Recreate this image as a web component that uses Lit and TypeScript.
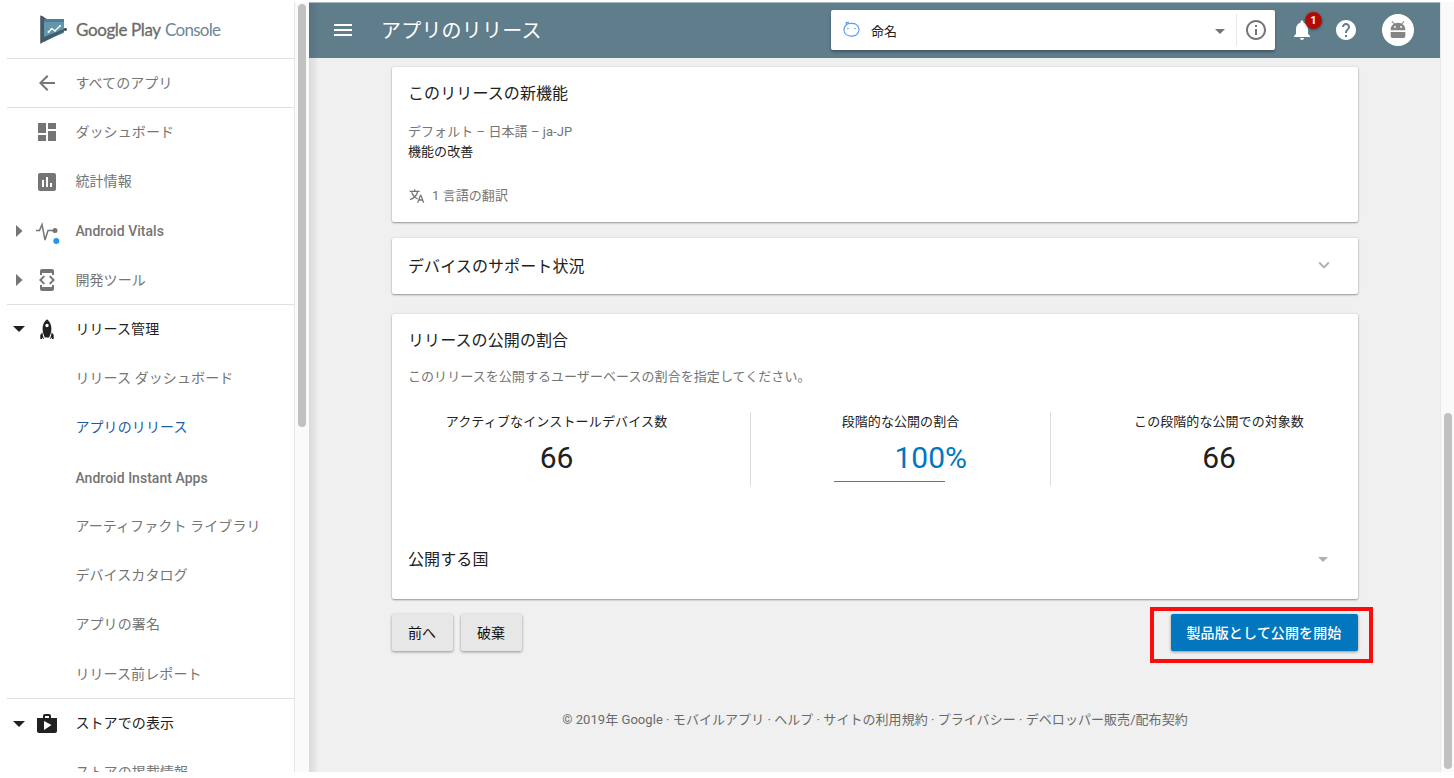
import { LitElement, html, svg, css, nothing } from "lit";
import { customElement, property } from "lit/decorators.js";
import { classMap } from "lit/directives/class-map.js";

const base = css`
  *, *::before, *::after { box-sizing: border-box; }
  svg { display: block; flex: none; }
`;

const icons: Record<string, unknown> = {
  back: svg`<path d="M20 11H7.83l5.59-5.59L12 4l-8 8 8 8 1.41-1.41L7.83 13H20v-2z"/>`,
  dashboard: svg`<path d="M3 13h8V3H3v10zm0 8h8v-6H3v6zm10 0h8V11h-8v10zm0-18v6h8V3h-8z"/>`,
  stats: svg`<path d="M19 3H5c-1.1 0-2 .9-2 2v14c0 1.1.9 2 2 2h14c1.1 0 2-.9 2-2V5c0-1.1-.9-2-2-2zM9 17H7v-7h2v7zm4 0h-2V7h2v10zm4 0h-2v-4h2v4z"/>`,
  vitals: svg`<path d="M1 11.500h3.500L7 5.500l3 15.500 3-9.500h6" fill="none" stroke="currentColor" stroke-width="1.500"/><circle cx="20" cy="11.500" r="2.500"/><circle cx="21.300" cy="22" r="3" fill="#2196f3"/>`,
  tools: svg`<path d="M7 5h10v2h2V3c0-1.1-.9-1.99-2-1.99L7 1c-1.1 0-2 .9-2 2v4h2V5zm8.41 11.59L20 12l-4.59-4.59L14 8.83 17.17 12 14 15.17l1.41 1.42zM10 15.17L6.83 12 10 8.83 8.59 7.41 4 12l4.59 4.59L10 15.17zM17 19H7v-2H5v4c0 1.1.9 2 2 2h10c1.1 0 2-.9 2-2v-4h-2v2z"/>`,
  rocket: svg`<path fill-rule="evenodd" d="M12 2.2C8.9 4.700 7.600 8 7.600 11.500c0 3.300 1 6.500 2.300 9.100h4.200c1.300-2.600 2.300-5.800 2.300-9.100C16.400 8 15.100 4.700 12 2.200zm0 4.600a1.700 1.700 0 1 1 0 3.400 1.700 1.700 0 0 1 0-3.400z"/><path d="M7.300 15.300 5.300 18v4h1.500l.7-1.500.9 1.500h.6c-.8-2-1.400-4.200-1.700-6.700zM16.700 15.300l2 2.700v4h-1.500l-.7-1.500-.9 1.500H15c.8-2 1.400-4.200 1.700-6.700z"/>`,
  store: svg`<path d="M16 6V4c0-1.110-.89-2-2-2h-4c-1.110 0-2 .89-2 2v2H2v13c0 1.110.89 2 2 2h16c1.110 0 2-.89 2-2V6h-6zm-6-2h4v2h-4V4zM9 18V9l7.500 4L9 18z"/>`,
  menu: svg`<path d="M3 18h18v-2H3v2zm0-5h18v-2H3v2zm0-7v2h18V6H3z"/>`,
  down: svg`<path d="M7 10l5 5 5-5z"/>`,
  expand: svg`<path d="M16.590 8.590L12 13.170 7.410 8.590 6 10l6 6 6-6z"/>`,
  info: svg`<path d="M11 17h2v-6h-2v6zm1-15C6.480 2 2 6.480 2 12s4.480 10 10 10 10-4.480 10-10S17.520 2 12 2zm0 18c-4.410 0-8-3.590-8-8s3.590-8 8-8 8 3.590 8 8-3.590 8-8 8zM11 9h2V7h-2v2z"/>`,
  bell: svg`<path d="M12 22c1.100 0 2-.9 2-2h-4c0 1.100.89 2 2 2zm6-6v-5c0-3.070-1.640-5.640-4.500-6.320V4c0-.83-.67-1.500-1.500-1.500s-1.500.67-1.500 1.500v.68C7.630 5.360 6 7.920 6 11v5l-2 2v1h16v-1l-2-2z"/>`,
  help: svg`<path d="M12 2C6.480 2 2 6.480 2 12s4.480 10 10 10 10-4.480 10-10S17.520 2 12 2zm1 17h-2v-2h2v2zm2.070-7.750l-.9.92C13.450 12.900 13 13.500 13 15h-2v-.5c0-1.100.45-2.100 1.170-2.830l1.240-1.260c.37-.36.59-.86.59-1.410 0-1.100-.9-2-2-2s-2 .9-2 2H8c0-2.210 1.790-4 4-4s4 1.790 4 4c0 .88-.36 1.680-.93 2.250z"/>`,
  android: svg`<path d="M4 14.200v4.700c0 1 .7 1.700 1.700 1.700h12.600c1 0 1.700-.7 1.700-1.700v-4.700H4zM16.700 5.570l2.300-2.500-.83-.83-2.500 2.600C14.600 4.350 13.300 4.100 12 4.100s-2.600.25-3.670.74L5.830 2.240 5 3.070l2.300 2.500C5.300 6.850 4 9 4 11.500v.9h16v-.9c0-2.500-1.300-4.650-3.300-5.930zM8.700 9.700c-.55 0-1-.45-1-1s.45-1 1-1 1 .45 1 1-.45 1-1 1zm6.600 0c-.55 0-1-.45-1-1s.45-1 1-1 1 .45 1 1-.45 1-1 1z"/>`,
  translate: svg`<path d="M1 4h15v2H1zM7.500 1.800h2V4h-2z"/><path d="M4 6.500C6 12 9.500 15 13 16.500M12.800 6C11.500 11 7 15.500 1.500 17.500" fill="none" stroke="currentColor" stroke-width="1.900"/><path d="M18.500 10h-2L12 22h2l1.120-3h4.750L21 22h2l-4.500-12zm-2.620 7l1.620-4.330L19.120 17h-3.240z"/>`,
  app: svg`<path d="M7.500 4.800C9 4 15.500 4 17.500 5.400c3.500 2 5 6.600 3.300 10-2 4-6 5.100-9.600 4.900-4.700-.2-8.700-3-8.700-7.600 0-2.900 1.200-5.500 3.500-7L5.200 3.300l2.600-.5z" fill="none" stroke="#5b9df5" stroke-width="1.500"/><circle cx="7.500" cy="10.700" r="1" fill="#5b9df5"/><circle cx="16.500" cy="10.700" r="1" fill="#5b9df5"/>`,
};

const icon = (name: string, size = 24) =>
  html`<svg width=${size} height=${size} viewBox="0 0 24 24" fill="currentColor" overflow="visible">${icons[name]}</svg>`;

@customElement("nav-row")
class NavRow extends LitElement {
  @property() label = "";
  @property() icon = "";
  @property() arrow = "";
  @property() kind = "";
  @property({ type: Boolean }) line = false;

  static styles = [base, css`
    :host { display: block; flex: none; }
    .row { height: 49.28px; display: flex; align-items: center; color: #757575; border-top: 1px solid transparent; }
    .line { border-top-color: #e0e0e0; }
    .arrow { width: 24px; display: flex; justify-content: center; }
    .icon { width: 32px; display: flex; justify-content: center; }
    .label { margin-left: 12.4px; padding-bottom: 1.2px; white-space: nowrap; line-height: 20px; letter-spacing: .1px; }
    .open { color: #212121; }
    .active { color: #1f5c9e; }
    .latin { font-weight: 500; padding-top: 2px; padding-bottom: 0; letter-spacing: .03px; }
    .latin.vit { padding-top: 0; }
  `];

  render() {
    const tri = this.arrow === "right"
      ? html`<svg width="8" height="12"><path d="M1 0l6.500 6L1 12z" fill="currentColor"/></svg>`
      : this.arrow === "down"
      ? html`<svg width="12" height="6"><path d="M0 0h12L6 6z" fill="currentColor"/></svg>`
      : nothing;
    return html`<div class=${classMap({ row: true, line: this.line, open: this.kind === "open", active: this.kind === "active" })}>
      <div class="arrow">${tri}</div>
      <div class="icon">${this.icon ? icon(this.icon, 24) : nothing}</div>
      <div class=${classMap({ label: true, latin: this.kind === "latin" || this.kind === "vit", vit: this.kind === "vit" })}>${this.label}</div>
    </div>`;
  }
}

interface Row { label: string; icon?: string; arrow?: string; kind?: string; line?: boolean; }

const rows: Row[] = [
  { label: "すべてのアプリ", icon: "back", line: true },
  { label: "ダッシュボード", icon: "dashboard", line: true },
  { label: "統計情報", icon: "stats" },
  { label: "Android Vitals", icon: "vitals", arrow: "right", kind: "vit" },
  { label: "開発ツール", icon: "tools", arrow: "right" },
  { label: "リリース管理", icon: "rocket", arrow: "down", kind: "open", line: true },
  { label: "リリース ダッシュボード" },
  { label: "アプリのリリース", kind: "active" },
  { label: "Android Instant Apps", kind: "latin" },
  { label: "アーティファクト ライブラリ" },
  { label: "デバイスカタログ" },
  { label: "アプリの署名" },
  { label: "リリース前レポート" },
  { label: "ストアでの表示", icon: "store", arrow: "down", kind: "open", line: true },
  { label: "ストアの掲載情報" },
];

@customElement("app-root")
class AppRoot extends LitElement {
  static styles = [base, css`
    :host { display: block; width: 1454px; height: 778px; background: #fff; overflow: hidden;
      font-family: Roboto, "Noto Sans CJK JP", sans-serif; font-size: 14px; color: #212121; }
    .frame { display: flex; height: 772px; padding: 2px 0 0 7px; overflow: hidden; }
    .side { width: 287px; flex: none; display: flex; flex-direction: column; overflow: hidden; }
    .brand { height: 56px; flex: none; padding: 12px 0 0 32px; }
    .track { width: 15px; flex: none; background: #fafafa; border-left: 1px solid #e6e6e6; padding: 2px 3px 0 3px; }
    .thumb { width: 8px; height: 423px; border-radius: 4px; background: #c1c1c1; }
    .main { width: 1131px; flex: none; background: linear-gradient(90deg, #d9d9d9, #f0f0f0 10px); display: flex; flex-direction: column; }
    .bar { height: 56px; flex: none; background: linear-gradient(90deg, #577280, #607d8b 10px); border-top: 1px solid #a9b9c1; color: #fff; display: flex; align-items: center; padding: 0 26px 2px 22px; }
    .title { margin-left: 26px; padding-top: 2px; font-size: 20px; line-height: 28px; width: 450px; white-space: nowrap; letter-spacing: .2px; }
    .picker { width: 444px; height: 40px; background: #fff; border-radius: 2px; display: flex; align-items: center; box-shadow: 0 2px 3px rgba(0,0,0,.3); color: #757575; padding-left: 11px; }
    .name { flex: 1; font-size: 13px; line-height: 20px; padding: 4px 0 0 10px; color: #212121; }
    .caret { padding-top: 2px; }
    .info { width: 39px; height: 32px; margin-left: 4px; border-left: 1px solid #e6e6e6; display: flex; align-items: center; justify-content: center; }
    .bell { position: relative; margin-left: 15px; }
    .badge { position: absolute; left: 15px; top: -6px; width: 17px; height: 17px; border-radius: 50%; background: #b00c04; font-size: 11px; font-weight: 700; line-height: 17px; text-align: center; box-shadow: 0 1px 3px rgba(0,0,0,.4); }
    .help { margin-left: 20px; }
    .avatar { width: 32px; height: 32px; border-radius: 50%; background: #fff; color: #858585; margin-left: auto; display: flex; align-items: center; justify-content: center; }
    .content { padding: 9px 82px 0 83px; display: flex; flex-direction: column; }
    .card { background: #fff; border-radius: 2px; box-shadow: 0 1px 2px rgba(0,0,0,.35), 0 0 3px rgba(0,0,0,.1); padding: 0 16px; }
    .c1 { height: 155px; padding-top: 15px; }
    .c2 { height: 56px; margin-top: 16px; display: flex; align-items: center; justify-content: space-between; }
    .c2 .head { margin-top: 2px; }
    .c2 .chev { margin-top: -3px; }
    .c3 { height: 285px; margin-top: 20px; padding-top: 15px; }
    .head { font-size: 16px; line-height: 24px; white-space: nowrap; letter-spacing: .1px; }
    .small { font-size: 13px; line-height: 20px; white-space: nowrap; letter-spacing: .06px; }
    .grey { color: #757575; }
    .locale { margin-top: 16px; }
    .trans { margin-top: 24px; display: flex; align-items: center; gap: 7px; padding-left: 1px; }
    .chev { color: #b0b0b0; margin-right: 7px; }
    .desc { margin-top: 14px; }
    .stats { display: flex; height: 74px; margin-top: 25px; }
    .stat { display: flex; flex-direction: column; align-items: center; flex: none; }
    .s1 { width: 342px; padding-right: 45px; }
    .s1 .small { letter-spacing: .16px; }
    .s2 { width: 301px; border-left: 1px solid #ddd; border-right: 1px solid #ddd; }
    .s3 { width: 336px; }
    .num { font-size: 30px; line-height: 36px; margin-top: 8px; }
    .pct { width: 133px; height: 42px; margin-top: 8px; color: #0277bd; font-size: 30px; line-height: 36px; display: flex; align-items: flex-start; }
    .field { width: 111px; height: 42px; border-bottom: 1px solid #3a7fc0; text-align: right; white-space: nowrap; }
    .countries { margin-top: 62px; display: flex; align-items: center; justify-content: space-between; }
    .countries .chev { margin-top: -2px; }
    .actions { display: flex; margin-top: 15px; gap: 8px; }
    .btn { height: 37px; border: 0; border-radius: 2px; background: #e7e7e7; font-family: inherit; font-size: 14px; font-weight: 400; color: #111; width: 61px; padding: 0 1px 1px 0; box-shadow: 0 1px 3px rgba(0,0,0,.4); white-space: nowrap; }
    .go { position: relative; margin-left: auto; }
    .publish { width: 187px; background: #0277bd; color: #fff; font-weight: 500; letter-spacing: .13px; }
    .ring { position: absolute; left: -21px; top: -7px; width: 223px; height: 56px; border: 4px solid #fb0d0d; pointer-events: none; }
    .foot { margin-top: 59px; text-align: center; color: #6a6a6a; font-size: 13px; line-height: 20px; white-space: nowrap; letter-spacing: .05px; }
    .right { width: 14px; flex: none; background: #fafafa; padding: 411px 2px 0 3px; border-left: 1px solid #e8e8e8; }
    .rthumb { width: 8px; height: 356px; border-radius: 4px; background: #c1c1c1; }
  `];

  render() {
    return html`<div class="frame">
      <nav class="side">
        <div class="brand">
          <svg width="190" height="32" viewBox="39 14 190 32">
            <path d="M40.500 15.500v27.500l26-13.500z" fill="#37474f"/>
            <path d="M40.500 15.500 44 17v24.500l-3.500 2.500z" fill="#455a64"/>
            <path d="M44 19h20v14L44 41z" fill="#6595ad"/>
            <path d="M44 19h20v3H44z" fill="#4f7f95"/>
            <path d="M44 37l20-8v2.500L44 42z" fill="#3f5d6b"/>
            <circle cx="65.500" cy="29.500" r="1.400" fill="#37474f"/>
            <path d="M48.500 32l3-3.300 3.500 2 5-4.700" fill="none" stroke="#fff" stroke-width="1.300"/>
            <g fill="#fff"><circle cx="48.500" cy="32" r="1"/><circle cx="51.700" cy="28.700" r="1"/><circle cx="55" cy="30.700" r="1"/><circle cx="60" cy="26" r="1"/></g>
            <text x="76" y="35.500" font-family="Lato, sans-serif" font-size="17" fill="#6b6b6b" stroke="#6b6b6b" stroke-width=".3" textLength="85">Google Play</text>
            <text x="165" y="35.500" font-family="Lato, sans-serif" font-size="17" fill="#6d8796" textLength="56">Console</text>
          </svg>
        </div>
        ${rows.map((r) => html`<nav-row .label=${r.label} .icon=${r.icon ?? ""} .arrow=${r.arrow ?? ""} .kind=${r.kind ?? ""} .line=${!!r.line}></nav-row>`)}
      </nav>
      <div class="track"><div class="thumb"></div></div>
      <main class="main">
        <header class="bar">
          ${icon("menu")}
          <div class="title">アプリのリリース</div>
          <div class="picker">${icon("app", 19)}<div class="name">命名</div><div class="caret">${icon("down")}</div><div class="info">${icon("info")}</div></div>
          <div class="bell">${icon("bell")}<span class="badge">1</span></div>
          <div class="help">${icon("help")}</div>
          <div class="avatar">${icon("android", 22)}</div>
        </header>
        <div class="content">
          <section class="card c1">
            <div class="head">このリリースの新機能</div>
            <div class="small grey locale">デフォルト – 日本語 – ja-JP</div>
            <div class="small">機能の改善</div>
            <div class="small grey trans">${icon("translate", 16)}<span>1 言語の翻訳</span></div>
          </section>
          <section class="card c2">
            <div class="head">デバイスのサポート状況</div>
            <div class="chev">${icon("expand", 22)}</div>
          </section>
          <section class="card c3">
            <div class="head">リリースの公開の割合</div>
            <div class="small grey desc">このリリースを公開するユーザーベースの割合を指定してください。</div>
            <div class="stats">
              <div class="stat s1"><div class="small">アクティブなインストールデバイス数</div><div class="num">66</div></div>
              <div class="stat s2"><div class="small">段階的な公開の割合</div><div class="pct"><div class="field">100</div>%</div></div>
              <div class="stat s3"><div class="small">この段階的な公開での対象数</div><div class="num">66</div></div>
            </div>
            <div class="countries"><div class="head">公開する国</div><div class="chev">${icon("down")}</div></div>
          </section>
          <div class="actions">
            <button class="btn">前へ</button>
            <button class="btn">破棄</button>
            <div class="go"><button class="btn publish">製品版として公開を開始</button><div class="ring"></div></div>
          </div>
          <footer class="foot">© 2019年 Google · モバイルアプリ · ヘルプ · サイトの利用規約 · プライバシー · デベロッパー販売/配布契約</footer>
        </div>
      </main>
      <div class="right"><div class="rthumb"></div></div>
    </div>`;
  }
}
